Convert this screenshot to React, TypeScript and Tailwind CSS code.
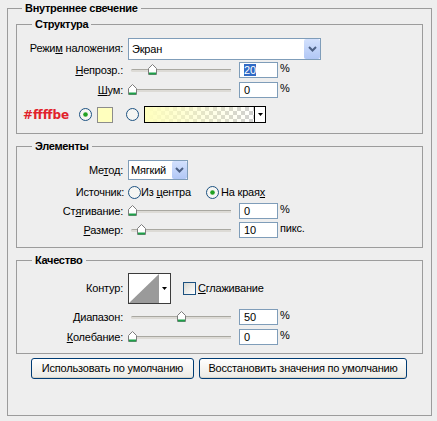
import React from "react";

function Chevron() {
  return (
    <svg width="9" height="6" viewBox="0 0 9 6">
      <path d="M1 1 L4.5 4.5 L8 1" fill="none" stroke="#4d6185" strokeWidth="2" />
    </svg>
  );
}

function Thumb() {
  return (
    <svg width="9" height="11" viewBox="0 0 9 11">
      <path d="M0.5 4.5 L4.5 0.5 L8.5 4.5 L8.5 10.5 L0.5 10.5 Z" fill="#ffffff" stroke="#7c7c7c" />
      <rect x="1" y="8.5" width="7" height="2" fill="#1ea14a" />
    </svg>
  );
}

function Radio({ checked }: { checked?: boolean }) {
  return (
    <svg width="13" height="13" viewBox="0 0 13 13" className="shrink-0">
      <circle cx="6.5" cy="6.5" r="6" fill="#f6f6f3" stroke="#1c5180" />
      {checked && <circle cx="6.5" cy="6.5" r="2.3" fill="#21a121" />}
    </svg>
  );
}

function DownTri() {
  return (
    <svg width="5" height="3" viewBox="0 0 5 3">
      <path d="M0 0 L5 0 L2.5 3 Z" fill="#000000" />
    </svg>
  );
}

function Label({ children }: { children: React.ReactNode }) {
  return <div className="w-[106px] shrink-0 text-right">{children}</div>;
}

function Input({ value, selected }: { value: string; selected?: boolean }) {
  return (
    <div className="ml-[5px] w-[39px] h-[16px] shrink-0 border border-[#7f9db9] bg-white pl-[4px] leading-[14px]">
      {selected ? <span className="bg-[#316ac5] text-white">{value}</span> : value}
    </div>
  );
}

function SliderRow({
  label,
  value,
  pos,
  unit,
  selected,
  className,
}: {
  label: React.ReactNode;
  value: string;
  pos: number;
  unit: string;
  selected?: boolean;
  className: string;
}) {
  return (
    <div className={"flex h-[16px] items-center " + className}>
      <Label>{label}</Label>
      <div className="ml-[5px] w-[106px] h-[16px] relative shrink-0">
        <div className="mt-[7px] ml-[3px] w-[100px] h-[3px] border-t border-[#a9a8a1] bg-[#dddbd6] rounded-l-full" />
        <div className="absolute top-[2px] leading-none" style={{ left: pos }}>
          <Thumb />
        </div>
      </div>
      <Input value={value} selected={selected} />
      <span className="ml-[2px] self-start">{unit}</span>
    </div>
  );
}

function Section({
  title,
  className,
  children,
}: {
  title: string;
  className: string;
  children: React.ReactNode;
}) {
  return (
    <div className={"ml-[8px] w-[407px] border border-[#9c9c9c] flex flex-col " + className}>
      <span className="-mt-[7px] ml-[15px] self-start px-[3px] bg-[#eeeeee] font-bold tracking-[-0.3px] h-[13px]">
        {title}
      </span>
      {children}
    </div>
  );
}

function Button({ className, children }: { className: string; children: React.ReactNode }) {
  return (
    <div
      className={
        "h-[21px] border border-[#003c74] rounded-[3px] bg-gradient-to-b from-white to-[#ebeae4] shadow-[inset_0_-1px_0_#d8d4c8] flex items-center justify-center " +
        className
      }
    >
      {children}
    </div>
  );
}

export default function App() {
  return (
    <div className="w-[437px] h-[421px] bg-[#eeeeee] text-[11px] leading-[13px] tracking-[-0.2px] text-black font-['Liberation_Sans',Arial,sans-serif] pt-[8px] pl-[7px] overflow-hidden">
      <div className="w-[425px] h-[408px] border border-[#9c9c9c] flex flex-col">
        <span className="-mt-[7px] ml-[14px] self-start px-[3px] bg-[#eeeeee] font-bold tracking-[-0.3px] h-[13px]">
          Внутреннее свечение
        </span>

        <Section title="Структура" className="mt-[9px] h-[110px]">
          <div className="mt-[7px] flex h-[22px] items-center">
            <div className="w-[106px] shrink-0 text-right -mt-[2px]">
              Режи<u>м</u> наложения:
            </div>
            <div className="ml-[5px] w-[193px] h-[22px] border border-[#7f9db9] bg-white flex">
              <div className="flex-1 pl-[3px] flex items-center">Экран</div>
              <div className="w-[16px] h-full rounded-[2px] bg-gradient-to-b from-[#d3e1fd] to-[#b1c7f5] flex items-center justify-center">
                <Chevron />
              </div>
            </div>
          </div>
          <SliderRow
            className="mt-[2px]"
            label={
              <>
                <u>Н</u>епрозр.:
              </>
            }
            value="20"
            selected
            pos={20}
            unit="%"
          />
          <SliderRow
            className="mt-[4px]"
            label={
              <>
                <u>Ш</u>ум:
              </>
            }
            value="0"
            pos={0}
            unit="%"
          />
          <div className="mt-[8px] flex items-center h-[17px] pl-[6px]">
            <span className="w-[56px] shrink-0 font-['DejaVu_Sans',sans-serif] font-bold text-[12px] leading-[14px] tracking-normal text-[#e1222b]">
              #ffffbe
            </span>
            <Radio checked />
            <div className="ml-[5px] w-[16px] h-[16px] shrink-0 border border-[#8c8c8c] bg-[#ffffbe]" />
            <div className="ml-[13px] flex">
              <Radio />
            </div>
            <div className="ml-[5px] w-[122px] h-[17px] shrink-0 border border-black flex">
              <div className="flex-1 [background:linear-gradient(to_right,#ffffbe,rgba(255,255,190,0)),repeating-conic-gradient(#cfcfcf_0_25%,#ffffff_0_50%)_0_0/8px_8px]" />
              <div className="w-[11px] border-l border-black bg-white flex items-center justify-center">
                <DownTri />
              </div>
            </div>
          </div>
        </Section>

        <Section title="Элементы" className="mt-[12px] h-[102px]">
          <div className="mt-[7px] flex h-[20px] items-center">
            <Label>
              Ме<u>т</u>од:
            </Label>
            <div className="ml-[5px] w-[60px] h-[20px] border border-[#7f9db9] bg-white flex">
              <div className="flex-1 pl-[2px] flex items-center">Мягкий</div>
              <div className="w-[15px] h-full rounded-[2px] bg-gradient-to-b from-[#d3e1fd] to-[#b1c7f5] flex items-center justify-center">
                <Chevron />
              </div>
            </div>
          </div>
          <div className="mt-[5px] flex h-[14px] items-center">
            <div className="w-[107px] shrink-0 text-right">Источник:</div>
            <div className="ml-[4px] flex">
              <Radio />
            </div>
            <span className="w-[65px] shrink-0">
              Из <u>ц</u>ентра
            </span>
            <Radio checked />
            <span className="ml-[2px]">
              На края<u>х</u>
            </span>
          </div>
          <SliderRow
            className="mt-[4px]"
            label={
              <>
                Ст<u>я</u>гивание:
              </>
            }
            value="0"
            pos={0}
            unit="%"
          />
          <SliderRow
            className="mt-[3px]"
            label={
              <>
                <u>Р</u>азмер:
              </>
            }
            value="10"
            pos={9}
            unit="пикс."
          />
        </Section>

        <Section title="Качество" className="mt-[12px] h-[94px]">
          <div className="mt-[6px] flex h-[31px] items-center">
            <Label>Контур:</Label>
            <div className="ml-[5px] w-[43px] h-[31px] shrink-0 border border-[#3c3c3c] bg-white flex">
              <svg width="30" height="29" viewBox="0 0 30 29" className="shrink-0">
                <polygon points="0,29 30,0 30,29" fill="#9a9a9a" />
              </svg>
              <div className="flex-1 flex items-center justify-center">
                <DownTri />
              </div>
            </div>
            <div className="ml-[12px] w-[13px] h-[13px] shrink-0 border border-[#1c5180] bg-gradient-to-br from-[#d8d8d2] to-white" />
            <span className="ml-[2px]">
              <u>С</u>глаживание
            </span>
          </div>
          <SliderRow
            className="mt-[5px]"
            label={
              <>
                <u>Д</u>иапазон:
              </>
            }
            value="50"
            pos={49}
            unit="%"
          />
          <SliderRow
            className="mt-[4px]"
            label={
              <>
                <u>К</u>олебание:
              </>
            }
            value="0"
            pos={0}
            unit="%"
          />
        </Section>

        <div className="mt-[4px] ml-[23px] flex gap-[5px]">
          <Button className="w-[163px]">Использовать по умолчанию</Button>
          <Button className="w-[208px]">Восстановить значения по умолчанию</Button>
        </div>
      </div>
    </div>
  );
}
